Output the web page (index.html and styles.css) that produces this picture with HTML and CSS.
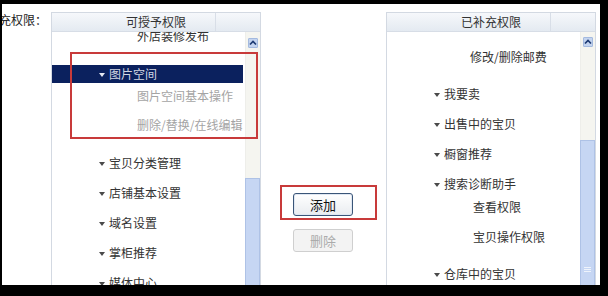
FILE: index.html
```html
<!DOCTYPE html>
<html lang="zh-CN">
<head>
  <meta charset="UTF-8" />
  <title>补充权限</title>
  <link rel="stylesheet" href="styles.css">
</head>
<body>
  <div class="frame">
    <div class="label"><span>补充权限：</span></div>

    <div class="panel">
      <div class="panel-head">可授予权限</div>
      <div class="panel-body">
        <ul class="tree">
          <li class="leaf">外店装修发布</li>
          <li class="node on">图片空间</li>
          <li class="leaf off">图片空间基本操作</li>
          <li class="leaf off">删除/替换/在线编辑</li>
          <li class="node">宝贝分类管理</li>
          <li class="node">店铺基本设置</li>
          <li class="node">域名设置</li>
          <li class="node">掌柜推荐</li>
          <li class="node">媒体中心</li>
        </ul>
        <div class="scroll">
          <span class="arrow"><svg width="8" height="8" viewBox="0 0 8 8"><path d="M1 5.5 L4 2.5 L7 5.5" fill="none" stroke="#1d3a72" stroke-width="1.7"/></svg></span>
          <span class="thumb"></span>
        </div>
      </div>
      <div class="mark"></div>
    </div>

    <div class="actions">
      <div class="mark-box"><button class="btn">添加</button></div>
      <button class="btn" disabled>删除</button>
    </div>

    <div class="panel added">
      <div class="panel-head">已补充权限</div>
      <div class="panel-body">
        <ul class="tree">
          <li class="leaf">修改/删除邮费</li>
          <li class="node">我要卖</li>
          <li class="node">出售中的宝贝</li>
          <li class="node">橱窗推荐</li>
          <li class="node">搜索诊断助手</li>
          <li class="leaf">查看权限</li>
          <li class="leaf">宝贝操作权限</li>
          <li class="node">仓库中的宝贝</li>
        </ul>
        <div class="scroll">
          <span class="arrow"><svg width="8" height="8" viewBox="0 0 8 8"><path d="M1 5.5 L4 2.5 L7 5.5" fill="none" stroke="#1d3a72" stroke-width="1.7"/></svg></span>
          <span class="thumb"><i class="grip"></i></span>
        </div>
      </div>
    </div>
  </div>
</body>
</html>
```

FILE: styles.css
```css
* {
  box-sizing: border-box;
}
body {
  margin: 0;
  background: #000;
  font-family: "Noto Sans CJK SC", "Noto Sans", sans-serif;
  font-size: 12px;
  color: #333;
}
.frame {
  display: flex;
  width: 598px;
  height: 281px;
  margin: 4px 0 0 2px;
  background: #fff;
  overflow: hidden;
}
.label {
  width: 49px;
  flex: none;
  display: flex;
  justify-content: flex-end;
  padding: 10px 4px 0 0;
  line-height: 12px;
  white-space: nowrap;
  color: #222;
}

/* list panels */
.panel {
  position: relative;
  width: 210px;
  flex: none;
  margin-top: 8px;
  border: 1px solid #d3d9e2;
  border-bottom: 0;
  display: flex;
  flex-direction: column;
}
.panel-head {
  height: 19px;
  line-height: 18px;
  text-align: center;
  border-bottom: 1px solid #d7dde6;
  background:
    linear-gradient(#d8dee7, #d8dee7) no-repeat right 44px top / 1px 100%,
    linear-gradient(#f6f8fb, #e4eaf1);
  color: #333;
}
.panel-body {
  flex: 1;
  display: flex;
  overflow: hidden;
}
.tree {
  flex: 1;
  margin: 0;
  padding: 0;
  list-style: none;
}
.tree li {
  height: 30px;
  line-height: 30px;
  white-space: nowrap;
}
.tree .node {
  padding-left: 47px;
}
.tree .node::before {
  content: "";
  display: inline-block;
  border: 3px solid transparent;
  border-top: 4px solid #4a4a4a;
  border-bottom: 0;
  margin-right: 4px;
  vertical-align: 2px;
}
.tree .leaf {
  padding-left: 85px;
}
.tree .leaf:first-child {
  margin-top: -6px;
  height: 20px;
  line-height: 20px;
}
.tree .leaf + .node {
  margin-top: 7px;
}
.tree .leaf + .on {
  margin: 19px 2px 0 0;
  height: 18px;
  line-height: 18px;
  background: #0b215e;
  color: #d3d7e3;
}
.tree .on::before {
  border-top-color: #e6e9f2;
}
.tree .off {
  color: #a4a4a4;
}
.tree .on + .off {
  height: 26px;
  line-height: 26px;
}
.tree .off + .off {
  height: 32px;
  line-height: 32px;
}

/* right side list */
.added .tree .leaf {
  padding-left: 86px;
}
.added .tree .leaf:first-child {
  margin-top: 10px;
  height: 30px;
  line-height: 30px;
  padding-left: 83px;
}
.added .tree .node + .leaf {
  margin-top: -7px;
}

/* scrollbar */
.scroll {
  width: 15px;
  flex: none;
  display: flex;
  flex-direction: column;
  background: #f5f5f0;
  border-left: 1px solid #eeeeea;
  padding-top: 6px;
}
.arrow {
  width: 10px;
  height: 10px;
  margin-left: 2px;
  display: flex;
  align-items: center;
  justify-content: center;
  background: #c4d4ef;
  border: 1px solid #a4badf;
  border-radius: 1px;
}
.thumb {
  flex: 1;
  margin: 130px 0 0 -1px;
  background: #c6d6f3;
  border: 1px solid #aec2e6;
  border-bottom: 0;
}
.added .scroll {
  padding-top: 5px;
}
.added .thumb {
  margin-top: 93px;
}
.grip {
  display: block;
  width: 7px;
  height: 5px;
  margin: 126px auto 0;
  border-top: 1px solid #eef3fb;
  border-bottom: 1px solid #eef3fb;
  background: linear-gradient(#eef3fb, #eef3fb) center / 100% 1px no-repeat;
}

/* middle buttons */
.actions {
  width: 125px;
  flex: none;
  display: flex;
  flex-direction: column;
  align-items: flex-start;
  padding: 181px 0 0 19px;
}
.mark-box {
  border: 2px solid #c83a3a;
  padding: 6px 22px 2px 11px;
}
.btn {
  width: 60px;
  height: 23px;
  padding: 0;
  font-family: inherit;
  font-size: 13px;
  color: #111;
  background: linear-gradient(#ffffff, #e9ecf0);
  border: 1px solid #3a5578;
  border-radius: 3px;
  box-shadow: inset 0 0 0 1px #dfe7f2;
}
.btn:disabled {
  margin: 9px 0 0 13px;
  color: #ababab;
  background: #f3f3f3;
  border-color: #cfcfcf;
  box-shadow: none;
}

/* annotation around the selected group */
.mark {
  position: absolute;
  left: 18px;
  top: 39px;
  width: 188px;
  height: 87px;
  border: 2px solid #c83a3a;
}
```
